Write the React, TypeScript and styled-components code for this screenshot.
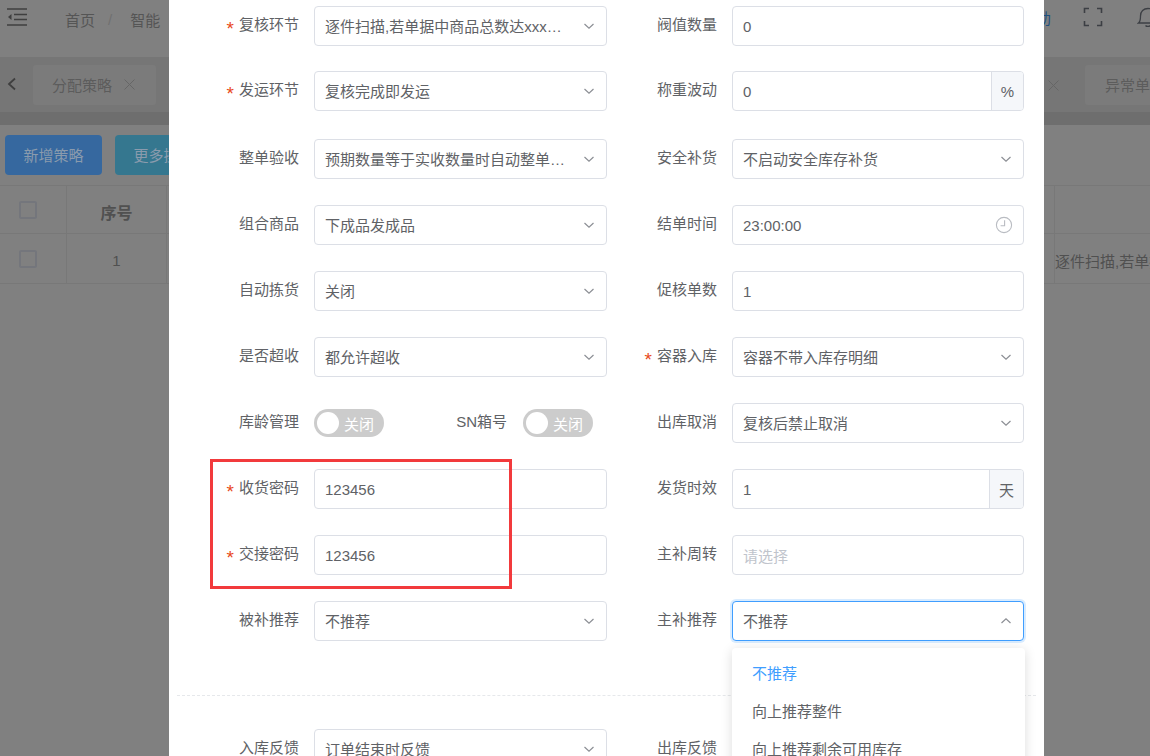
import styled, { createGlobalStyle } from "styled-components";

const GlobalStyle = createGlobalStyle`
  html, body {
    margin: 0;
    padding: 0;
    height: 100%;
    overflow: hidden;
  }
  body {
    font-family: "Liberation Sans", "Noto Sans CJK SC", sans-serif;
    font-size: 15px;
    color: #606266;
  }
  * {
    box-sizing: border-box;
  }
`;

const Screen = styled.div`
  position: relative;
  width: 1150px;
  height: 756px;
  overflow: hidden;
  background-color: #808080;
`;

/* page behind the dialog, colours are already dimmed by the mask */
const TopBar = styled.div`
  height: 57px;
  display: flex;
  align-items: center;
  justify-content: space-between;
  padding: 0 0 19px 7px;
`;

const FoldWrap = styled.div`
  display: flex;
  margin-top: -5px;
`;

const Crumbs = styled.div`
  display: flex;
  align-items: center;
  gap: 13px;
  margin-left: 38px;
  color: #555;
  flex: 1;
`;

const CrumbSep = styled.span`
  color: #707070;
  margin-right: 5px;
`;

const TopRight = styled.div`
  display: flex;
  align-items: center;
  margin-right: -9px;
  margin-top: -4px;
`;

const Help = styled.span`
  color: #20507f;
  margin-right: 32px;
`;

const BellWrap = styled.div`
  margin-left: 34px;
  display: flex;
`;

const TagBar = styled.div`
  height: 68px;
  background: linear-gradient(#767676 0, #767676 55px, #6e6e6e 55px);
  display: flex;
  align-items: flex-start;
  padding-top: 8px;
  position: relative;
`;

const TagBack = styled.div`
  width: 33px;
  height: 40px;
  display: flex;
  align-items: center;
  padding: 0 0 3px 7px;
`;

const Tag = styled.div`
  width: 123px;
  height: 40px;
  border-radius: 3px;
  background-color: #7b7b7b;
  color: #5c5c5c;
  display: flex;
  align-items: center;
  padding: 0 0 2px 19px;
  gap: 12px;
`;

const TagTail = styled.div`
  margin-left: auto;
  display: flex;
  align-items: center;
  height: 40px;
  gap: 26px;
  margin-right: -20px;
`;

const EndTag = styled(Tag)`
  padding-left: 20px;
  width: 85px;
`;

const Toolbar = styled.div`
  height: 60px;
  padding: 10px 0 0 5px;
  display: flex;
  gap: 13px;
`;

const ToolButton = styled.div<{ $bg: string }>`
  width: 97px;
  height: 40px;
  border-radius: 4px;
  background-color: ${(p) => p.$bg};
  color: #8a9bad;
  display: flex;
  align-items: center;
  justify-content: center;
  padding-bottom: 2px;
`;

const TableRow = styled.div<{ $h: number }>`
  height: ${(p) => p.$h}px;
  display: grid;
  grid-template-columns: 67px 100px 1fr auto;
  border-top: 1px solid #787878;
  border-bottom: 1px solid #787878;
  margin-bottom: -1px;
  align-items: stretch;
`;

const TableCell = styled.div<{ $strong?: boolean; $drop?: number }>`
  border-right: 1px solid #787878;
  display: flex;
  align-items: center;
  justify-content: center;
  padding-top: ${(p) => p.$drop ?? 0}px;
  color: #505050;
  font-weight: ${(p) => (p.$strong ? 700 : 400)};
  font-size: ${(p) => (p.$strong ? 16 : 15)}px;
`;

const TailCell = styled.div`
  display: flex;
  align-items: center;
  width: 95px;
  padding-top: 4px;
  white-space: nowrap;
  overflow: hidden;
  color: #505050;
`;

const Check = styled.span<{ $shift: number }>`
  width: 18px;
  height: 18px;
  border: 2px solid #74767c;
  border-radius: 2px;
  margin-right: ${(p) => p.$shift}px;
`;

/* dialog */
const Dialog = styled.div`
  position: absolute;
  top: 0;
  left: 169px;
  width: 875px;
  height: 756px;
  background-color: #fff;
  padding: 6px 8px 0;
  overflow: hidden;
`;

const Row = styled.div<{ $after?: number }>`
  display: grid;
  grid-template-columns: 430px 409px;
  column-gap: 8px;
  height: 40px;
  margin-bottom: ${(p) => p.$after ?? 26}px;
`;

const Pair = styled.div`
  display: flex;
  align-items: center;
`;

const Field = styled.div`
  display: flex;
  align-items: center;
  min-width: 0;
`;

const Label = styled.label<{ $width: number; $required?: boolean }>`
  width: ${(p) => p.$width}px;
  flex: none;
  text-align: right;
  color: #606266;
  line-height: 20px;
  margin-top: -2px;
  white-space: nowrap;
  &::before {
    content: ${(p) => (p.$required ? '"*"' : "none")};
    color: #e8481a;
    margin-right: 5px;
    font-size: 19px;
    line-height: 0;
    vertical-align: -5px;
  }
`;

const Control = styled.div<{ $focus?: boolean }>`
  flex: 1;
  min-width: 0;
  margin-left: 15px;
  height: 40px;
  display: flex;
  align-items: center;
  border: 1px solid ${(p) => (p.$focus ? "#409eff" : "#dcdfe6")};
  box-shadow: ${(p) => (p.$focus ? "0 0 0 2px rgba(64, 158, 255, 0.2)" : "none")};
  border-radius: 4px;
  background-color: #fff;
`;

const Value = styled.span<{ $placeholder?: boolean }>`
  flex: 1;
  min-width: 0;
  padding: 0 10px;
  color: ${(p) => (p.$placeholder ? "#c0c4cc" : "#606266")};
  white-space: nowrap;
  overflow: hidden;
  text-overflow: ellipsis;
`;

const SelectValue = styled(Value)`
  padding: 0 4px 2px 10px;
`;

const Caret = styled.span`
  width: 35px;
  flex: none;
  display: flex;
  align-items: center;
  justify-content: center;
`;

const ClockSlot = styled(Caret)`
  padding-right: 4px;
`;

const Append = styled.span<{ $width: number }>`
  width: ${(p) => p.$width}px;
  height: 100%;
  flex: none;
  display: flex;
  align-items: center;
  justify-content: center;
  border-left: 1px solid #dcdfe6;
  border-radius: 0 3px 3px 0;
  background-color: #f5f7fa;
  color: #606266;
`;

const Toggle = styled.div<{ $indent: number }>`
  position: relative;
  width: 70px;
  height: 28px;
  flex: none;
  margin-left: ${(p) => p.$indent}px;
  border-radius: 14px;
  background-color: #cccccc;
  color: #fff;
  display: flex;
  align-items: center;
  padding-left: 30px;
  &::before {
    content: "";
    position: absolute;
    left: 3px;
    top: 3px;
    width: 22px;
    height: 22px;
    border-radius: 50%;
    background-color: #fff;
  }
`;

const Divider = styled.div`
  border-top: 1px dashed #e6e8eb;
  margin: 54px 0 33px;
`;

const Dropdown = styled.ul`
  position: absolute;
  left: 732px;
  top: 648px;
  width: 293px;
  height: 140px;
  margin: 0;
  padding: 7px 0;
  list-style: none;
  background-color: #fff;
  border-radius: 4px;
  box-shadow: 0 2px 12px rgba(0, 0, 0, 0.14);
`;

const Option = styled.li<{ $active?: boolean }>`
  height: 38px;
  line-height: 38px;
  padding-left: 20px;
  color: ${(p) => (p.$active ? "#409eff" : "#606266")};
`;

const Callout = styled.div`
  position: absolute;
  left: 210px;
  top: 459px;
  width: 302px;
  height: 130px;
  border: 3px solid #f23a3c;
  pointer-events: none;
`;

const Chevron = ({ up }: { up?: boolean }) => (
  <svg width="12" height="12" viewBox="0 0 12 12" fill="none">
    <path
      d={up ? "M1.5 8 L6 3.8 L10.5 8" : "M1.5 4 L6 8.2 L10.5 4"}
      stroke="#8b8e94"
      strokeWidth="1.2"
    />
  </svg>
);

const Clock = () => (
  <svg width="18" height="18" viewBox="0 0 18 18" fill="none">
    <circle cx="9" cy="9" r="7.6" stroke="#b9bcc2" strokeWidth="1.1" />
    <path d="M9.6 4.2 V9.8 H5.6" stroke="#b9bcc2" strokeWidth="1.1" />
  </svg>
);

const Close = () => (
  <svg width="11" height="11" viewBox="0 0 11 11" fill="none">
    <path d="M0.5 0.5 L10.5 10.5 M10.5 0.5 L0.5 10.5" stroke="#666" strokeWidth="1" />
  </svg>
);

const FoldIcon = () => (
  <svg width="20" height="18" viewBox="0 0 20 18" fill="none">
    <path d="M0 1 H20 M7 6.5 H20 M7 11.5 H20 M0 17 H20" stroke="#3f3f3f" strokeWidth="1.6" />
    <path d="M4.5 6 V12 L1 9 Z" fill="#3f3f3f" />
  </svg>
);

const FullIcon = () => (
  <svg width="20" height="20" viewBox="0 0 20 20" fill="none">
    <path d="M6 1.5 H1.5 V6 M14 1.5 H18.5 V6 M6 18.5 H1.5 V14 M14 18.5 H18.5 V14" stroke="#3c3f44" strokeWidth="1.6" />
  </svg>
);

const BellIcon = () => (
  <svg width="22" height="22" viewBox="0 0 22 22" fill="none">
    <path
      d="M1.5 17 C3.5 15.5 3.5 13 3.5 10 C3.5 5.5 6.5 2.5 11 2.5 C15.5 2.5 18.5 5.5 18.5 10 C18.5 13 18.5 15.5 20.5 17 Z"
      stroke="#3c3f44"
      strokeWidth="1.3"
    />
    <path d="M8.5 19.5 C9.5 20.8 12.5 20.8 13.5 19.5" stroke="#3c3f44" strokeWidth="1.3" />
  </svg>
);

const BackIcon = () => (
  <svg width="10" height="14" viewBox="0 0 10 14" fill="none">
    <path d="M8 1.5 L2 7 L8 12.5" stroke="#3f3f3f" strokeWidth="1.8" />
  </svg>
);

type Item = { label: string; required?: boolean } & (
  | { kind: "select"; value: string; focus?: boolean }
  | { kind: "input"; value: string; placeholder?: boolean; append?: string; appendWidth?: number; clock?: boolean }
);

const FormField = ({ item, width = 122 }: { item: Item; width?: number }) => (
  <Field>
    <Label $width={width} $required={item.required}>
      {item.label}
    </Label>
    {item.kind === "select" ? (
      <Control $focus={item.focus}>
        <SelectValue>{item.value}</SelectValue>
        <Caret>
          <Chevron up={item.focus} />
        </Caret>
      </Control>
    ) : (
      <Control>
        <Value $placeholder={item.placeholder}>{item.value}</Value>
        {item.clock ? (
          <ClockSlot>
            <Clock />
          </ClockSlot>
        ) : null}
        {item.append ? <Append $width={item.appendWidth ?? 32}>{item.append}</Append> : null}
      </Control>
    )}
  </Field>
);

const App = () => {
  return (
    <Screen>
      <GlobalStyle />
      <TopBar>
        <FoldWrap>
          <FoldIcon />
        </FoldWrap>
        <Crumbs>
          <span>首页</span>
          <CrumbSep>/</CrumbSep>
          <span>智能</span>
        </Crumbs>
        <TopRight>
          <Help>帮助</Help>
          <FullIcon />
          <BellWrap>
            <BellIcon />
          </BellWrap>
        </TopRight>
      </TopBar>
      <TagBar>
        <TagBack>
          <BackIcon />
        </TagBack>
        <Tag>
          分配策略
          <Close />
        </Tag>
        <TagTail>
          <Close />
          <EndTag>异常单</EndTag>
        </TagTail>
      </TagBar>
      <Toolbar>
        <ToolButton $bg="#36689f">新增策略</ToolButton>
        <ToolButton $bg="#35778f">更多操作</ToolButton>
      </Toolbar>
      <TableRow $h={49}>
        <TableCell>
          <Check $shift={10} />
        </TableCell>
        <TableCell $strong $drop={5}>
          序号
        </TableCell>
        <TableCell />
        <TailCell />
      </TableRow>
      <TableRow $h={51}>
        <TableCell>
          <Check $shift={11} />
        </TableCell>
        <TableCell $drop={4}>1</TableCell>
        <TableCell />
        <TailCell>逐件扫描,若单据中</TailCell>
      </TableRow>

      <Dialog>
        <Row $after={25}>
          <FormField item={{ label: "复核环节", required: true, kind: "select", value: "逐件扫描,若单据中商品总数达xxx件时自动整单复核" }} />
          <FormField width={102} item={{ label: "阀值数量", kind: "input", value: "0" }} />
        </Row>
        <Row $after={28}>
          <FormField item={{ label: "发运环节", required: true, kind: "select", value: "复核完成即发运" }} />
          <FormField width={102} item={{ label: "称重波动", kind: "input", value: "0", append: "%" }} />
        </Row>
        <Row>
          <FormField item={{ label: "整单验收", kind: "select", value: "预期数量等于实收数量时自动整单验收入库完成" }} />
          <FormField width={102} item={{ label: "安全补货", kind: "select", value: "不启动安全库存补货" }} />
        </Row>
        <Row>
          <FormField item={{ label: "组合商品", kind: "select", value: "下成品发成品" }} />
          <FormField width={102} item={{ label: "结单时间", kind: "input", value: "23:00:00", clock: true }} />
        </Row>
        <Row>
          <FormField item={{ label: "自动拣货", kind: "select", value: "关闭" }} />
          <FormField width={102} item={{ label: "促核单数", kind: "input", value: "1" }} />
        </Row>
        <Row>
          <FormField item={{ label: "是否超收", kind: "select", value: "都允许超收" }} />
          <FormField width={102} item={{ label: "容器入库", required: true, kind: "select", value: "容器不带入库存明细" }} />
        </Row>
        <Row>
          <Pair>
            <Label $width={122}>库龄管理</Label>
            <Toggle $indent={15}>关闭</Toggle>
            <Label $width={123}>SN箱号</Label>
            <Toggle $indent={16}>关闭</Toggle>
          </Pair>
          <FormField width={102} item={{ label: "出库取消", kind: "select", value: "复核后禁止取消" }} />
        </Row>
        <Row>
          <FormField item={{ label: "收货密码", required: true, kind: "input", value: "123456" }} />
          <FormField width={102} item={{ label: "发货时效", kind: "input", value: "1", append: "天", appendWidth: 34 }} />
        </Row>
        <Row>
          <FormField item={{ label: "交接密码", required: true, kind: "input", value: "123456" }} />
          <FormField width={102} item={{ label: "主补周转", kind: "input", value: "请选择", placeholder: true }} />
        </Row>
        <Row $after={0}>
          <FormField item={{ label: "被补推荐", kind: "select", value: "不推荐" }} />
          <FormField width={102} item={{ label: "主补推荐", kind: "select", value: "不推荐", focus: true }} />
        </Row>
        <Divider />
        <Row>
          <FormField item={{ label: "入库反馈", kind: "select", value: "订单结束时反馈" }} />
          <FormField width={102} item={{ label: "出库反馈", kind: "select", value: "订单结束时反馈" }} />
        </Row>
      </Dialog>

      <Callout />
      <Dropdown>
        <Option $active>不推荐</Option>
        <Option>向上推荐整件</Option>
        <Option>向上推荐剩余可用库存</Option>
      </Dropdown>
    </Screen>
  );
};

export default App;
